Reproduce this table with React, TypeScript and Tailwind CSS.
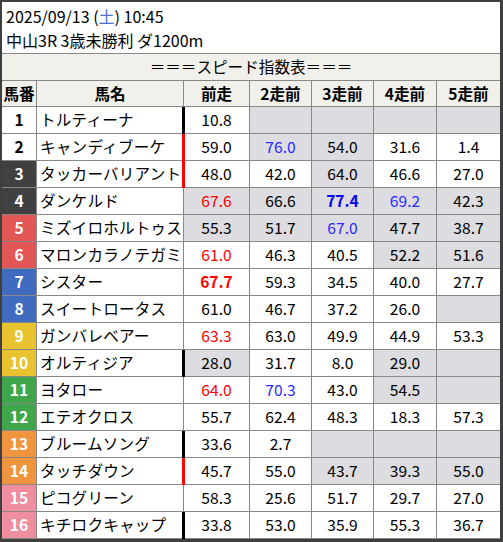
import React from "react";

type Cell = [string, boolean?, ("r" | "b" | "R" | "B")?];

type Row = {
  n: number;
  name: string;
  bar?: "k" | "r";
  cells: Cell[];
};

const waku: Record<number, string> = {
  1: "bg-white text-black",
  2: "bg-white text-black",
  3: "bg-[#404040] text-white",
  4: "bg-[#404040] text-white",
  5: "bg-[#e35656] text-white",
  6: "bg-[#e35656] text-white",
  7: "bg-[#3f6cbf] text-white",
  8: "bg-[#3f6cbf] text-white",
  9: "bg-[#e8c22f] text-white",
  10: "bg-[#e8c22f] text-white",
  11: "bg-[#3fa74a] text-white",
  12: "bg-[#3fa74a] text-white",
  13: "bg-[#f0953d] text-white",
  14: "bg-[#f0953d] text-white",
  15: "bg-[#ef8e9f] text-white",
  16: "bg-[#ef8e9f] text-white",
};

const rows: Row[] = [
  { n: 1, name: "トルティーナ", bar: "k", cells: [["10.8"], ["", true], ["", true], ["", true], ["", true]] },
  { n: 2, name: "キャンディブーケ", bar: "r", cells: [["59.0"], ["76.0", true, "b"], ["54.0", true], ["31.6"], ["1.4"]] },
  { n: 3, name: "タッカーバリアント", bar: "r", cells: [["48.0"], ["42.0"], ["64.0", true], ["46.6"], ["27.0"]] },
  { n: 4, name: "ダンケルド", cells: [["67.6", true, "r"], ["66.6", true], ["77.4", true, "B"], ["69.2", true, "b"], ["42.3", true]] },
  { n: 5, name: "ミズイロホルトゥス", cells: [["55.3", true], ["51.7", true], ["67.0", true, "b"], ["47.7", true], ["38.7", true]] },
  { n: 6, name: "マロンカラノテガミ", cells: [["61.0", false, "r"], ["46.3"], ["40.5"], ["52.2", true], ["51.6", true]] },
  { n: 7, name: "シスター", cells: [["67.7", false, "R"], ["59.3"], ["34.5"], ["40.0"], ["27.7"]] },
  { n: 8, name: "スイートロータス", cells: [["61.0"], ["46.7"], ["37.2"], ["26.0"], ["", true]] },
  { n: 9, name: "ガンバレベアー", cells: [["63.3", false, "r"], ["63.0"], ["49.9"], ["44.9"], ["53.3"]] },
  { n: 10, name: "オルティジア", bar: "k", cells: [["28.0", true], ["31.7"], ["8.0"], ["29.0", true], ["", true]] },
  { n: 11, name: "ヨタロー", cells: [["64.0", false, "r"], ["70.3", false, "b"], ["43.0"], ["54.5", true], ["", true]] },
  { n: 12, name: "エテオクロス", cells: [["55.7"], ["62.4"], ["48.3"], ["18.3"], ["57.3"]] },
  { n: 13, name: "ブルームソング", bar: "k", cells: [["33.6"], ["2.7"], ["", true], ["", true], ["", true]] },
  { n: 14, name: "タッチダウン", bar: "r", cells: [["45.7"], ["55.0"], ["43.7", true], ["39.3", true], ["55.0", true]] },
  { n: 15, name: "ピコグリーン", cells: [["58.3"], ["25.6"], ["51.7"], ["29.7"], ["27.0"]] },
  { n: 16, name: "キチロクキャップ", bar: "k", cells: [["33.8"], ["53.0"], ["35.9"], ["55.3"], ["36.7"]] },
];

const colorClass = {
  r: "text-[#ff0000]",
  b: "text-[#2b2bff]",
  R: "text-[#ff0000] font-bold",
  B: "text-[#0000ee] font-bold",
};

const grid = "grid grid-cols-[35px_147px_66px_62px_62px_63px_63px]";

function App() {
  return (
    <div
      className="w-[503px] h-[542px] bg-white text-black border-[#3f3f3f] border-t-2 border-l-2 border-r-[3px] border-b-[3px] text-[15.6px]"
      style={{ fontFamily: '"Noto Sans CJK JP", "Noto Sans", sans-serif' }}
    >
      <div className="h-[52px] border-b border-[#888] px-[4px] pt-[2px] leading-[24px] text-[16px]">
        <p>
          2025/09/13 (<span className="text-[#4a72d0]">土</span>) 10:45
        </p>
        <p>中山3R 3歳未勝利 ダ1200m</p>
      </div>

      <div className="h-[27px] border-b border-[#888] bg-[#f2f0eb] flex items-center justify-center">
        ＝＝＝スピード指数表＝＝＝
      </div>

      <div className={`${grid} h-[26px] border-b border-[#888] bg-[#f2f0eb] font-bold`}>
        {["馬番", "馬名", "前走", "2走前", "3走前", "4走前", "5走前"].map((h, i) => (
          <div
            key={h}
            className={`flex items-center justify-center ${i < 6 ? "border-r border-[#888]" : ""}`}
          >
            {h}
          </div>
        ))}
      </div>

      {rows.map((r) => (
        <div key={r.n} className={`${grid} h-[27px] border-b border-[#888]`}>
          <div
            className={`flex items-center justify-center font-bold border-r border-[#888] ${waku[r.n]}`}
          >
            {r.n}
          </div>
          <div className="flex items-center pl-[3px] border-r border-[#888] tracking-[0.2px] whitespace-nowrap overflow-hidden">
            {r.name}
          </div>
          {r.cells.map(([v, gray, color], i) => (
            <div
              key={i}
              className={`relative flex items-center justify-center ${i < 4 ? "border-r border-[#888]" : ""} ${
                gray ? "bg-[#dcdce1]" : "bg-white"
              } ${color ? colorClass[color] : ""}`}
            >
              {i === 0 && r.bar && (
                <span
                  className={`absolute left-[-2px] top-0 bottom-[-1px] w-[3px] ${
                    r.bar === "k" ? "bg-black" : "bg-[#ff0000]"
                  }`}
                />
              )}
              {v}
            </div>
          ))}
        </div>
      ))}
    </div>
  );
}

export default App;
